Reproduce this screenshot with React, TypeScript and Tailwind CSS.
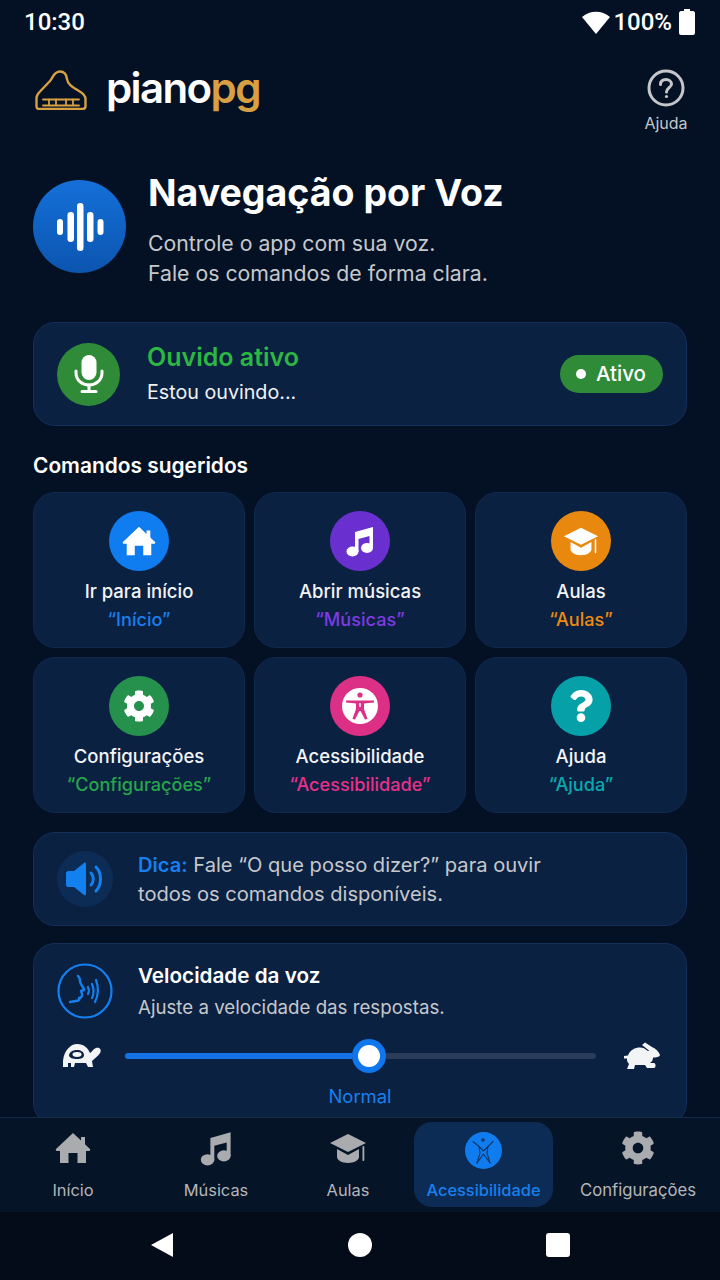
import React from "react";
import { FaCog, FaQuestion } from "react-icons/fa";

const HomeIcon = ({ size, color }: { size: number; color: string }) => (
  <svg width={size} height={size} viewBox="0 0 36 36" fill={color}>
    <path d="M18 3 L26 10.5 V7 H30 V14.2 L35 19 C35.6 19.8 35 21 34 21 H31 V33 H22.5 V23 H13.5 V33 H5 V21 H2 C1 21 .4 19.8 1 19Z" />
  </svg>
);

const MusicIcon = ({ size, color }: { size: number; color: string }) => (
  <svg width={size} height={size} viewBox="0 0 32 32" fill={color}>
    <path d="M11 7 L29 2 V23 H25.5 V11 L14.5 14 V27 H11Z" />
    <ellipse cx="8.5" cy="26.5" rx="6" ry="5" />
    <ellipse cx="23" cy="23" rx="6" ry="5" />
  </svg>
);

const CapIcon = ({ size, color, tassel }: { size: number; color: string; tassel: number }) => (
  <svg width={size} height={size} viewBox="0 0 38 38" fill={color}>
    <path d="M19 5 L37 14 L19 23 L1 14Z" />
    <path d="M8 20 L19 26 L30 20 V28 C30 31 25 34 19 34 C13 34 8 31 8 28Z" />
    <rect x="33.5" y="17" width={tassel} height="15" rx="0.8" />
  </svg>
);

const MicIcon = () => (
  <svg width="32" height="40" viewBox="0 0 32 40" fill="none" stroke="#fff" strokeWidth="3" strokeLinecap="round">
    <rect x="8.5" y="1" width="15" height="25" rx="7.5" fill="#fff" stroke="none" />
    <path d="M3 17 V19 C3 26 9 31 16 31 C23 31 29 26 29 19 V17" />
    <path d="M16 31 V37 M9 37.5 H23" />
  </svg>
);

const SpeakerIcon = () => (
  <svg width="40" height="36" viewBox="0 0 40 36" fill="none" stroke="#1380f0" strokeWidth="3" strokeLinecap="round">
    <path d="M1 12 C1 11 2 10 3 10 H9 L19 2 C20 1 21 2 21 3 V33 C21 34 20 35 19 34 L9 26 H3 C2 26 1 25 1 24Z" fill="#1380f0" stroke="none" />
    <path d="M26 12 C29 15 29 21 26 24" />
    <path d="M31 6 C37 12 37 24 31 30" />
  </svg>
);

const AccessTile = () => (
  <svg width="36" height="36" viewBox="0 0 36 36">
    <circle cx="18" cy="18" r="18" fill="#fff" />
    <circle cx="18" cy="7" r="2.6" fill="#dc2f86" />
    <path d="M4 12.5 H32 V14.5 L22 15.5 V21 L25.5 31 L23 31.5 L18.6 23 H17.4 L13 31.5 L10.5 31 L14 21 V15.5 L4 14.5Z" fill="#dc2f86" />
    <path d="M18 15 V19" stroke="#fff" strokeWidth="1.4" />
  </svg>
);

const AccessNav = () => (
  <svg width="37" height="37" viewBox="0 0 37 37" fill="none" stroke="#12345f" strokeWidth="1.1" strokeLinecap="round" strokeLinejoin="round">
    <circle cx="18.5" cy="18.5" r="18.5" fill="#0f7cf0" stroke="none" />
    <circle cx="18" cy="8" r="1.7" fill="#12345f" stroke="none" />
    <path d="M8 9.5 L14 14.5 L15 21 L12 31 M28 9.5 L23 14.5 L22 21 L25 31" />
    <path d="M14 14.5 L18.5 19 L23 14.5 M12 31 L18.5 22 L25 31" />
  </svg>
);

const Logo = () => (
  <svg width="52" height="40" viewBox="0 0 52 40" fill="none" stroke="#d6a043" strokeWidth="2.4" strokeLinejoin="round" strokeLinecap="round">
    <path d="M1.5 36 V28 C1.5 25.5 2.5 24 5 21.5 L15 11 C18 8 18.5 1.5 25 1.5 C30 1.5 31.5 5 32 9 C32.5 14 37 17 44 21 C48.5 23.5 50.5 25.5 50.5 29 V36 C50.5 38 49.5 39 47.5 39 H4.5 C2.5 39 1.5 38 1.5 36Z" />
    <path d="M8 29.5 H44" strokeWidth="1.8" />
    <path d="M8 35.5 H44 M14 29.5 V35.5 M21 29.5 V35.5 M31 29.5 V35.5 M38 29.5 V35.5" strokeWidth="1.8" />
  </svg>
);

const Help = () => (
  <svg width="38" height="38" viewBox="0 0 38 38" fill="none" stroke="#c4c6ca">
    <circle cx="19" cy="19" r="17" strokeWidth="3" />
    <path d="M13.5 15.5 C13.5 12 16 10.5 19 10.5 C22 10.5 24.5 12.5 24.5 15 C24.5 18.5 19.5 19 19.5 23" strokeWidth="3" strokeLinecap="round" />
    <circle cx="19.5" cy="27.5" r="1.6" fill="#c4c6ca" stroke="none" />
  </svg>
);

const Wave = () => (
  <svg width="52" height="52" viewBox="0 0 52 52" fill="#fff">
    <rect x="3" y="18" width="6" height="16" rx="3" />
    <rect x="13.5" y="11" width="6.5" height="30" rx="3.2" />
    <rect x="23" y="2" width="6.5" height="48" rx="3.2" />
    <rect x="33" y="11" width="6.5" height="30" rx="3.2" />
    <rect x="43.5" y="18" width="6" height="16" rx="3" />
  </svg>
);

const VoiceHead = () => (
  <svg width="56" height="56" viewBox="0 0 56 56" fill="none" stroke="#1380f0" strokeWidth="2.2" strokeLinecap="round" strokeLinejoin="round">
    <circle cx="28" cy="28" r="26.5" />
    <path d="M21 13 C24 15 22 18 24 21 C25 23 27 25 27 27 L24 28 C26 32 25 35 22 35 C23 37 21 38 19 38 L13 39" strokeWidth="2.4" />
    <path d="M31 24 C32 26 32 29 31 31" />
    <path d="M35 21 C37 26 37 31 35 35" />
    <path d="M39 17 C42 25 42 31 38 39" />
  </svg>
);

const Turtle = () => (
  <svg width="40" height="26" viewBox="0 0 40 26" fill="#f3f4f6">
    <path fillRule="evenodd" d="M1 18 C2 7 9 1 15 1 C22 1 26 5 28 10 C30 9 31 6 34 5 C37 4 39.5 6 38.5 9 C37.5 12 33 15 30 18 L31 24 H26 L24 20 H13 L12 24 H9 L9 20 H6 L6 24 H1Z M7 12 C8 8 12 7 15 7 C19 7 22 9 22 12 C22 15 19 16 15 16 C11 16 7 15 7 12Z" />
    <ellipse cx="15" cy="11.5" rx="4.5" ry="2.4" />
  </svg>
);

const Rabbit = () => (
  <svg width="38" height="28" viewBox="0 0 38 28" fill="#f3f4f6">
    <path d="M1 14 L5 13.5 C7 8 12 5.5 17 5.5 C20 5.5 22 6.5 24 8.5 C25 9 26 9 26 8.5 L19 3 L22 0.5 L29 5 C33 6.5 36 10 37 13 C36.5 15 33 15.5 30 15.5 C30 18 29 20 27 21 L31 21 C33 21 33 26 31 26 H24 L22 23 H12 L11 27 H4 L6 22 C4 20 4 18.5 4 16.5 L1 16.5Z" />
  </svg>
);

const commands = [
  { t: "Ir para início", q: "“Início”", bg: "bg-[#0f7cf0]", c: "text-[#1780ee]", icon: <HomeIcon size={34} color="#fff" /> },
  { t: "Abrir músicas", q: "“Músicas”", bg: "bg-[#6a30cf]", c: "text-[#7d3be0]", icon: <MusicIcon size={32} color="#fff" /> },
  { t: "Aulas", q: "“Aulas”", bg: "bg-[#e8880f]", c: "text-[#ee8a10]", icon: <CapIcon size={36} color="#fff" tassel={1.6} /> },
  { t: "Configurações", q: "“Configurações”", bg: "bg-[#25914d]", c: "text-[#27a64a]", icon: <FaCog size={32} color="#fff" /> },
  { t: "Acessibilidade", q: "“Acessibilidade”", bg: "bg-[#dc2f86]", c: "text-[#e8308a]", icon: <AccessTile /> },
  { t: "Ajuda", q: "“Ajuda”", bg: "bg-[#06a0a8]", c: "text-[#0aa9ad]", icon: <FaQuestion size={32} color="#fff" /> },
];

const nav = [
  { l: "Início", w: "w-[146px]", p: "", icon: <HomeIcon size={36} color="#a9abaf" /> },
  { l: "Músicas", w: "w-[140px]", p: "", icon: <MusicIcon size={36} color="#a9abaf" /> },
  { l: "Aulas", w: "w-[128px]", p: "pr-[4px]", icon: <CapIcon size={38} color="#a9abaf" tassel={1.8} /> },
];

export default function App() {
  return (
    <div className="w-[720px] h-[1280px] flex flex-col overflow-hidden bg-[#041124] text-white font-['Inter',sans-serif]">
      <div className="flex-1 min-h-0 overflow-hidden flex flex-col">
        <div className="h-[44px] shrink-0 flex items-center justify-between pl-[24px] pr-[25px] font-['Roboto',sans-serif] text-[24px] font-medium">
          <span>10:30</span>
          <div className="flex items-center gap-[2px]">
            <svg width="30" height="24" viewBox="0 0 30 24" fill="#fff"><path d="M1 7 C9 0 21 0 29 7 L15 24Z" /></svg>
            <span>100%</span>
            <svg width="16" height="26" viewBox="0 0 16 26" fill="#fff" className="ml-[5px]"><path d="M5 0 H11 V2 H14 C15 2 16 3 16 4 V24 C16 25 15 26 14 26 H2 C1 26 0 25 0 24 V4 C0 3 1 2 2 2 H5Z" /></svg>
          </div>
        </div>

        <div className="flex items-start justify-between pl-[35px] pr-[32px] pt-[24px] h-[136px] shrink-0">
          <div className="flex items-center gap-[19px] mt-[2px]">
            <Logo />
            <span className="text-[42px] font-semibold leading-[40px] tracking-[-1.6px] -mt-[4px]">piano<span className="text-[#d6a043]">pg</span></span>
          </div>
          <div className="flex flex-col items-center w-[44px] mt-[1px]">
            <Help />
            <span className="text-[16px] text-[#c4c6ca] mt-[6px] leading-[20px]">Ajuda</span>
          </div>
        </div>

        <div className="flex items-start pl-[33px] pr-[33px] shrink-0 gap-[22px]">
          <div className="w-[93px] h-[93px] rounded-full bg-gradient-to-b from-[#1470d8] to-[#0c55b0] flex items-center justify-center shrink-0"><Wave /></div>
          <div className="flex flex-col -mt-[9px]">
            <h1 className="text-[37.5px] font-bold leading-[44px]">Navegação por Voz</h1>
            <p className="text-[21.25px] leading-[30px] text-[#c6c8cc] mt-[13px]">Controle o app com sua voz.<br />Fale os comandos de forma clara.</p>
          </div>
        </div>

        <div className="mx-[33px] mt-[34px] h-[104px] shrink-0 rounded-[22px] bg-[#0b2142] border border-[#12305a] flex items-center pl-[23px] pr-[23px]">
          <div className="w-[63px] h-[63px] rounded-full bg-[#2f8b38] flex items-center justify-center shrink-0"><MicIcon /></div>
          <div className="ml-[27px] flex-1">
            <div className="text-[25px] font-semibold leading-[32px] text-[#2cb742] -mt-[1px]">Ouvido ativo</div>
            <div className="text-[19.7px] leading-[28px] mt-[5px] text-[#f1f2f3]">Estou ouvindo...</div>
          </div>
          <div className="w-[103px] h-[38px] rounded-full bg-[#2f8b38] flex items-center pl-[16px] gap-[10px] text-[20.5px] font-medium">
            <span className="w-[10px] h-[10px] rounded-full bg-white" />Ativo
          </div>
        </div>

        <h2 className="mx-[33px] mt-[26px] text-[20.9px] font-semibold leading-[28px] shrink-0">Comandos sugeridos</h2>

        <div className="mx-[33px] mt-[12px] grid grid-cols-3 gap-[9px] shrink-0">
          {commands.map((c) => (
            <div key={c.t} className="h-[156px] rounded-[22px] bg-[#0b2142] border border-[#10294e] flex flex-col items-center pt-[18px]">
              <div className={`w-[60px] h-[60px] rounded-full flex items-center justify-center ${c.bg}`}>{c.icon}</div>
              <div className="text-[18.5px] font-medium leading-[26px] mt-[7px] text-[#f3f4f6]">{c.t}</div>
              <div className={`text-[18.1px] font-medium leading-[26px] mt-[2px] ${c.c}`}>{c.q}</div>
            </div>
          ))}
        </div>

        <div className="mx-[33px] mt-[19px] h-[94px] shrink-0 rounded-[22px] bg-[#0b2142] border border-[#12305a] flex items-center pl-[23px]">
          <div className="w-[56px] h-[56px] rounded-full bg-[#0c2c56] flex items-center justify-center shrink-0"><SpeakerIcon /></div>
          <p className="ml-[25px] text-[20.1px] leading-[29px] text-[#c6c8cc] pt-[2px]"><span className="font-semibold text-[#1780ee]">Dica:</span> Fale “O que posso dizer?” para ouvir<br />todos os comandos disponíveis.</p>
        </div>

        <div className="mx-[33px] mt-[17px] h-[182px] shrink-0 rounded-[22px] bg-[#0b2142] border border-[#12305a] pl-[23px] pr-[25px] pt-[19px]">
          <div className="flex items-start">
            <VoiceHead />
            <div className="ml-[25px]">
              <div className="text-[20.7px] font-semibold leading-[26px]">Velocidade da voz</div>
              <div className="text-[18.7px] leading-[26px] mt-[6px] text-[#c6c8cc]">Ajuste a velocidade das respostas.</div>
            </div>
          </div>
          <div className="flex items-center mt-[17px] h-[36px]">
            <div className="w-[68px] pl-[5px] shrink-0"><Turtle /></div>
            <div className="flex items-center">
              <div className="w-[227px] h-[6px] rounded-l-full bg-[#1272e6]" />
              <div className="w-[34px] h-[34px] rounded-full bg-[#0f76ee] flex items-center justify-center shrink-0"><div className="w-[22px] h-[22px] rounded-full bg-white" /></div>
              <div className="w-[210px] h-[6px] rounded-r-full bg-[#2a3c5a]" />
            </div>
            <div className="pl-[27px] shrink-0"><Rabbit /></div>
          </div>
          <div className="text-center text-[18.4px] text-[#1780ee] leading-[24px] mt-[10px] pl-[2px]">Normal</div>
        </div>
      </div>

      <div className="h-[95px] shrink-0 bg-[#061427] border-t border-[#152b4a] flex items-stretch pt-[4px] pb-[5px] relative z-10">
        {nav.map((n) => (
          <div key={n.l} className={`${n.w} ${n.p} flex flex-col items-center`}>
            <div className="h-[44px] mt-[4px] flex items-center justify-center">{n.icon}</div>
            <span className="text-[16.4px] text-[#b4b6ba] leading-[22px] mt-[9px]">{n.l}</span>
          </div>
        ))}
        <div className="w-[139px] rounded-[18px] bg-[#0d2c55] flex flex-col items-center">
          <div className="h-[44px] mt-[6px] flex items-center justify-center"><AccessNav /></div>
          <span className="text-[16.4px] text-[#1780ee] leading-[22px] mt-[7px] font-medium">Acessibilidade</span>
        </div>
        <div className="flex-1 flex flex-col items-center pl-[3px]">
          <div className="h-[44px] mt-[4px] flex items-center justify-center"><FaCog size={34} color="#a9abaf" /></div>
          <span className="text-[16.7px] text-[#b4b6ba] leading-[22px] mt-[9px]">Configurações</span>
        </div>
      </div>

      <div className="h-[68px] shrink-0 bg-[#030c18] flex items-center justify-center pb-[3px]">
        <div className="flex items-center gap-[174px]">
          <svg width="24" height="26" viewBox="0 0 24 26" fill="#fff"><path d="M23 1 V25 L1 13Z" /></svg>
          <div className="w-[24px] h-[24px] rounded-full bg-white" />
          <div className="w-[24px] h-[24px] rounded-[3px] bg-white" />
        </div>
      </div>
    </div>
  );
}
